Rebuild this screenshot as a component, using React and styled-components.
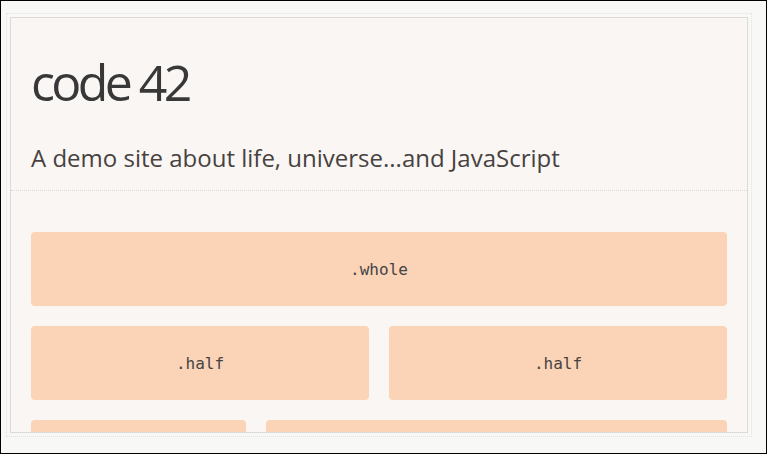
import React from 'react';
import styled, { createGlobalStyle } from 'styled-components';

const GlobalStyle = createGlobalStyle`
  html, body {
    margin: 0;
    padding: 0;
    background: #f8f8f8;
  }
  * {
    box-sizing: border-box;
  }
`;

const Frame = styled.div`
  width: 767px;
  height: 454px;
  border: 1px solid #000;
  background: #f8f8f7;
  padding: 16px 0 0 9px;
  overflow: hidden;
`;

const Panel = styled.div`
  position: relative;
  width: 738px;
  height: 416px;
  background: #faf6f4;
  border: 1px solid #dedad8;
  overflow: hidden;
  outline: 1px dotted #e2e2e2;
  outline-offset: 3px;
`;

const Header = styled.header`
  padding: 34px 20px 17px;
  border-bottom: 1px dotted #d9d5d3;
`;

const Title = styled.h1`
  margin: 0;
  font-family: "Open Sans", "Noto Sans", sans-serif;
  font-size: 50px;
  line-height: 60px;
  font-weight: 400;
  letter-spacing: -3.6px;
  color: #383838;
`;

const Tagline = styled.p`
  margin: 30px 0 0;
  font-family: "Open Sans", "Noto Sans", sans-serif;
  font-size: 24px;
  line-height: 31px;
  color: #474240;
`;

const Grid = styled.main`
  padding: 41px 20px 0;
  display: flex;
  flex-direction: column;
  gap: 20px;
`;

const Row = styled.div`
  display: grid;
  grid-template-columns: ${(p) => p.cols};
  gap: 20px;
`;

const Block = styled.div`
  height: 74px;
  border-radius: 4px;
  background: #fbd3b6;
  display: flex;
  align-items: center;
  justify-content: center;
  font-family: "DejaVu Sans Mono", "Liberation Mono", monospace;
  font-size: 16px;
  color: #444;
`;

export default function App() {
  return (
    <>
      <GlobalStyle />
      <Frame>
        <Panel>
          <Header>
            <Title>code 42</Title>
            <Tagline>A demo site about life, universe...and JavaScript</Tagline>
          </Header>
          <Grid>
            <Row cols="1fr">
              <Block>.whole</Block>
            </Row>
            <Row cols="1fr 1fr">
              <Block>.half</Block>
              <Block>.half</Block>
            </Row>
            <Row cols="215fr 461fr">
              <Block />
              <Block />
            </Row>
          </Grid>
        </Panel>
      </Frame>
    </>
  );
}
